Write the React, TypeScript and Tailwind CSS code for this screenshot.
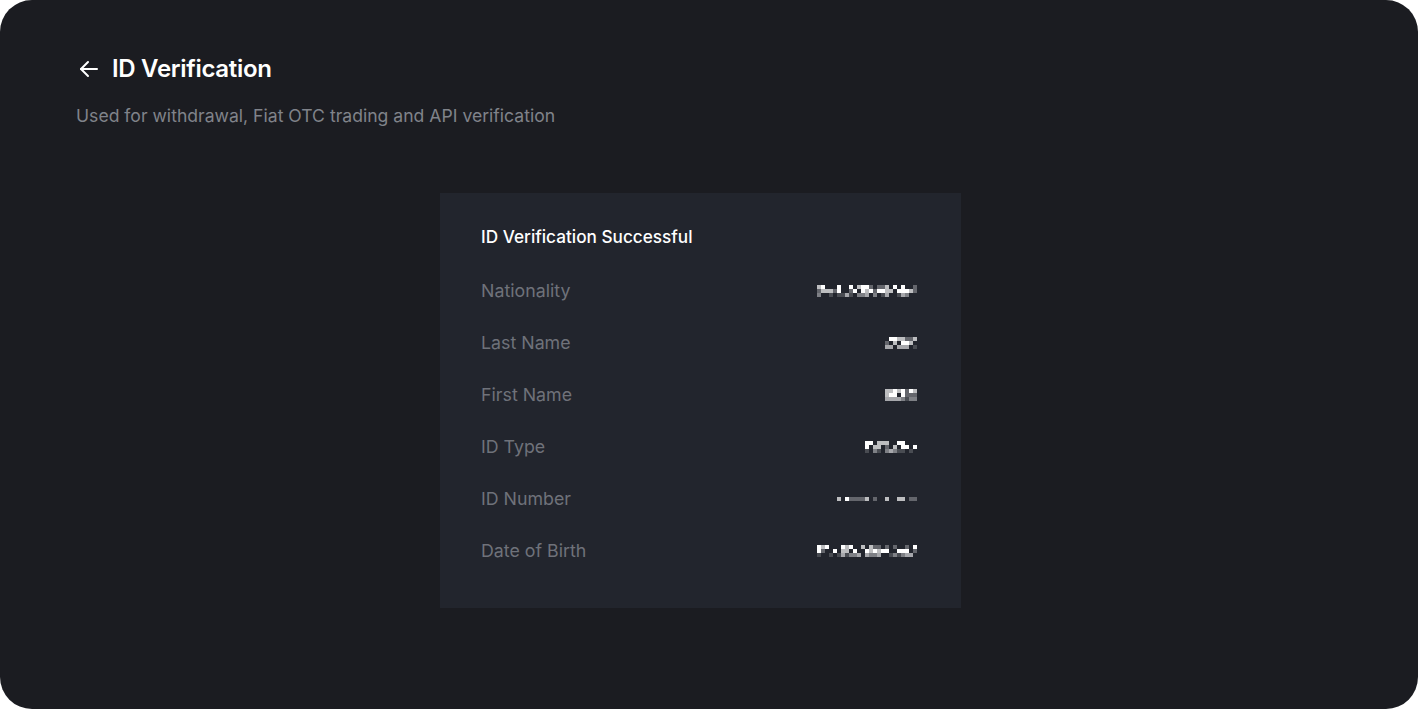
import React from "react";

function Mosaic({ width, seed, thin }: { width: number; seed: number; thin?: boolean }) {
  const cols = Math.round(width / 4);
  const rows = thin ? 1 : 3;
  let s = seed;
  const rnd = () => {
    s = (s * 9301 + 49297) % 233280;
    return s / 233280;
  };
  const cells: React.ReactNode[] = [];
  for (let r = 0; r < rows; r++) {
    for (let c = 0; c < cols; c++) {
      const v = rnd();
      const o = v < 0.35 ? 0 : v < 0.55 ? 0.3 : v < 0.75 ? 0.7 : 1;
      cells.push(
        <div key={r + "-" + c} className="w-[4px] h-[4px] bg-white" style={{ opacity: r === 2 && !thin ? o * 0.6 : o }} />
      );
    }
  }
  return (
    <div
      className="grid"
      style={{ gridTemplateColumns: `repeat(${cols}, 4px)` }}
      aria-label="hidden value"
    >
      {cells}
    </div>
  );
}

const rows = [
  { label: "Nationality", w: 100, seed: 11 },
  { label: "Last Name", w: 32, seed: 23 },
  { label: "First Name", w: 32, seed: 37 },
  { label: "ID Type", w: 52, seed: 41 },
  { label: "ID Number", w: 88, seed: 53, thin: true },
  { label: "Date of Birth", w: 100, seed: 67 },
];

export default function App() {
  return (
    <div className="w-[1418px] h-[709px] bg-white" style={{ fontFamily: "Inter, 'Noto Sans', sans-serif" }}>
      <div className="w-full h-full rounded-[32px] bg-[#1b1c21] pl-[76px] pt-[53px]">
        <div className="flex items-center gap-[11px] h-[32px]">
          <svg width="24" height="24" viewBox="0 0 24 24" fill="none" stroke="white" strokeWidth="2" strokeLinecap="round" strokeLinejoin="round" className="ml-[1px]">
            <path d="M20 12H4" />
            <path d="M11 5l-7 7 7 7" />
          </svg>
          <h1 className="text-[24px] font-semibold text-white tracking-[-0.3px]">ID Verification</h1>
        </div>
        <p className="mt-[19px] text-[17.6px] leading-[24px] text-[#80838a]">
          Used for withdrawal, Fiat OTC trading and API verification
        </p>
        <div className="mt-[65px] ml-[364px] w-[521px] h-[415px] bg-[#22252d] px-[41px] pt-[32px]">
          <div className="text-[17.2px] leading-[24px] font-medium text-white h-[24px] flex items-center">
            ID Verification Successful
          </div>
          <div className="mt-[30px] flex flex-col gap-[28px]">
            {rows.map((r) => (
              <div key={r.label} className="flex items-center justify-between h-[24px] pr-[3px]">
                <span className="text-[17.8px] text-[#6f727a]">{r.label}</span>
                <Mosaic width={r.w} seed={r.seed} thin={r.thin} />
              </div>
            ))}
          </div>
        </div>
      </div>
    </div>
  );
}
